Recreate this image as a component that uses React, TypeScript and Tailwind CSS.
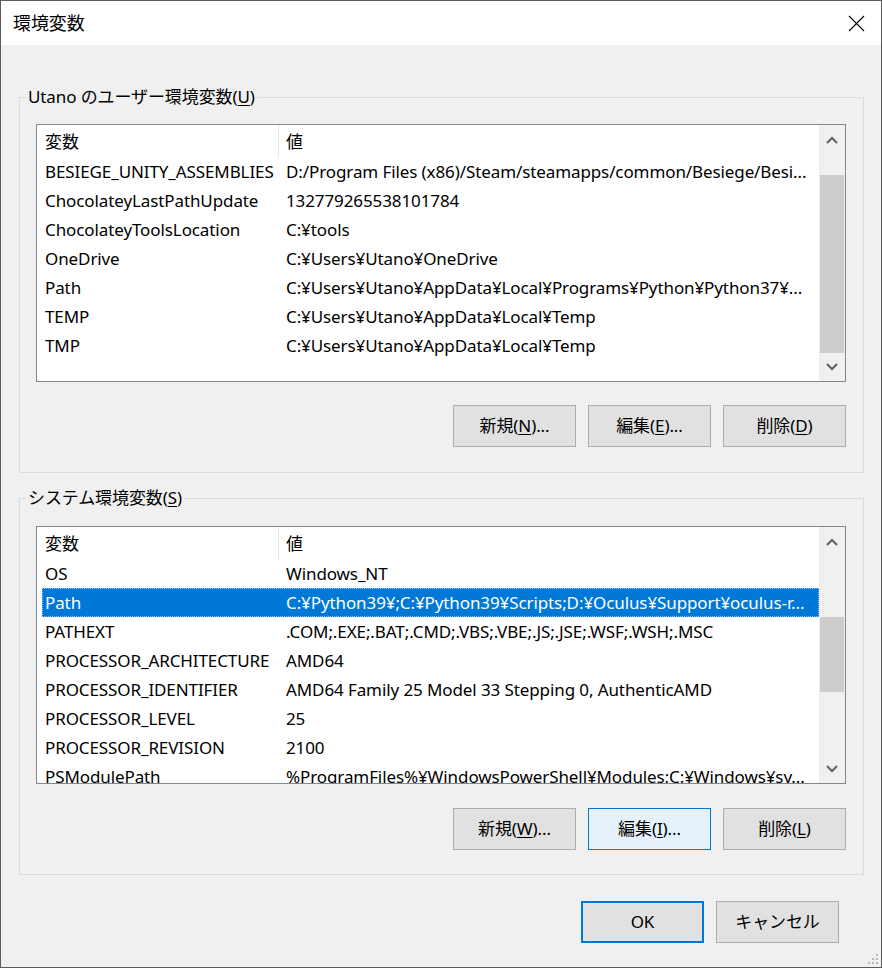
import React, { ReactElement } from 'react';

type Row = { name: string; value: string };

const userVars: Row[] = [
  { name: 'BESIEGE_UNITY_ASSEMBLIES', value: 'D:/Program Files (x86)/Steam/steamapps/common/Besiege/Besi...' },
  { name: 'ChocolateyLastPathUpdate', value: '132779265538101784' },
  { name: 'ChocolateyToolsLocation', value: 'C:¥tools' },
  { name: 'OneDrive', value: 'C:¥Users¥Utano¥OneDrive' },
  { name: 'Path', value: 'C:¥Users¥Utano¥AppData¥Local¥Programs¥Python¥Python37¥...' },
  { name: 'TEMP', value: 'C:¥Users¥Utano¥AppData¥Local¥Temp' },
  { name: 'TMP', value: 'C:¥Users¥Utano¥AppData¥Local¥Temp' },
];

const systemVars: Row[] = [
  { name: 'OS', value: 'Windows_NT' },
  { name: 'Path', value: 'C:¥Python39¥;C:¥Python39¥Scripts;D:¥Oculus¥Support¥oculus-r...' },
  { name: 'PATHEXT', value: '.COM;.EXE;.BAT;.CMD;.VBS;.VBE;.JS;.JSE;.WSF;.WSH;.MSC' },
  { name: 'PROCESSOR_ARCHITECTURE', value: 'AMD64' },
  { name: 'PROCESSOR_IDENTIFIER', value: 'AMD64 Family 25 Model 33 Stepping 0, AuthenticAMD' },
  { name: 'PROCESSOR_LEVEL', value: '25' },
  { name: 'PROCESSOR_REVISION', value: '2100' },
  { name: 'PSModulePath', value: '%ProgramFiles%¥WindowsPowerShell¥Modules;C:¥Windows¥sy...' },
];

const font = { fontFamily: '"Segoe UI", "Noto Sans", "Noto Sans CJK JP", sans-serif' };

function Chevron({ up }: { up?: boolean }) {
  return (
    <svg width="12" height="8" viewBox="0 0 12 8">
      <polyline
        points={up ? '1,7 6,2 11,7' : '1,1 6,6 11,1'}
        fill="none"
        stroke="#606060"
        strokeWidth="2"
      />
    </svg>
  );
}

function Scrollbar({ thumbTop, thumbHeight }: { thumbTop: number; thumbHeight: number }) {
  return (
    <div className="flex w-[26px] shrink-0 flex-col bg-[#f0f0f0]">
      <div className="flex h-[30px] items-center justify-center">
        <Chevron up />
      </div>
      <div className="flex-1 px-[1px]">
        <div className="bg-[#cdcdcd]" style={{ marginTop: thumbTop, height: thumbHeight }} />
      </div>
      <div className="flex h-[28px] items-center justify-center">
        <Chevron />
      </div>
    </div>
  );
}

function VarList({
  rows,
  selected,
  thumbTop,
  thumbHeight,
}: {
  rows: Row[];
  selected?: number;
  thumbTop: number;
  thumbHeight: number;
}) {
  return (
    <div className="flex h-[258px] w-[810px] border border-[#828790] bg-white">
      <div className="flex min-w-0 flex-1 flex-col overflow-hidden">
        <div className="flex h-[32px] shrink-0 items-center leading-[29px]">
          <div className="flex h-full w-[242px] items-center border-r border-[#e5e5e5] pl-[8px]">変数</div>
          <div className="pl-[7px]">値</div>
        </div>
        {rows.map((row, idx) => (
          <div
            key={row.name}
            className={`ml-[5px] flex h-[29px] shrink-0 items-center whitespace-nowrap leading-[29px] ${
              idx === selected
                ? 'bg-[#0078d7] text-white outline-1 -outline-offset-1 outline-dotted outline-[#8cc0ec]'
                : 'text-black'
            }`}
          >
            <div className="w-[236px] shrink-0 overflow-hidden pl-[3px]">{row.name}</div>
            <div className="min-w-0 flex-1 overflow-hidden pl-[8px]">{row.value}</div>
          </div>
        ))}
      </div>
      <Scrollbar thumbTop={thumbTop} thumbHeight={thumbHeight} />
    </div>
  );
}

function Button({
  label,
  hotkey,
  suffix = '',
  variant = 'normal',
}: {
  label: string;
  hotkey?: string;
  suffix?: string;
  variant?: 'normal' | 'hover' | 'default';
}) {
  const styles =
    variant === 'hover'
      ? 'border border-[#0078d7] bg-[#e5f1fb]'
      : variant === 'default'
        ? 'border-2 border-[#0078d7] bg-[#e1e1e1]'
        : 'border border-[#adadad] bg-[#e1e1e1]';
  return (
    <div className={`flex h-[42px] w-[123px] items-center justify-center text-black ${styles}`}>
      {label}
      {hotkey && (
        <>
          (<span className="underline underline-offset-2">{hotkey}</span>){suffix}
        </>
      )}
    </div>
  );
}

function Group({
  title,
  hotkey,
  children,
  className,
}: {
  title: string;
  hotkey: string;
  children: React.ReactNode;
  className?: string;
}) {
  return (
    <fieldset className={`ml-[18px] w-[845px] min-w-0 border border-[#dcdcdc] px-[16px] ${className ?? ''}`}>
      <legend className="ml-[-10px] px-[2px] text-[17px] leading-[24px] text-black">
        {title}(<span className="underline underline-offset-2">{hotkey}</span>)
      </legend>
      {children}
    </fieldset>
  );
}

export default function App(): ReactElement {
  return (
    <div
      className="relative flex h-[968px] w-[882px] flex-col border border-[#5c5c5c] bg-[#f0f0f0] text-[17px] tracking-[-0.1px]"
      style={font}
    >
      <div className="flex h-[44px] shrink-0 items-center justify-between bg-white pl-[12px] pr-[16px]">
        <span className="text-[18px] text-black">環境変数</span>
        <svg width="17" height="17" viewBox="0 0 17 17">
          <path d="M1 1 L16 16 M16 1 L1 16" stroke="#000" strokeWidth="1.1" />
        </svg>
      </div>

      <Group title="Utano のユーザー環境変数" hotkey="U" className="mt-[40px] pb-[25px] pt-[15px]">
        <VarList rows={userVars} thumbTop={21} thumbHeight={178} />
        <div className="mr-[1px] mt-[23px] flex justify-end gap-[12px]">
          <Button label="新規" hotkey="N" suffix="..." />
          <Button label="編集" hotkey="E" suffix="..." />
          <Button label="削除" hotkey="D" />
        </div>
      </Group>

      <Group title="システム環境変数" hotkey="S" className="mt-[13px] pb-[24px] pt-[16px]">
        <VarList rows={systemVars} selected={1} thumbTop={60} thumbHeight={75} />
        <div className="mr-[1px] mt-[24px] flex justify-end gap-[12px]">
          <Button label="新規" hotkey="W" suffix="..." />
          <Button label="編集" hotkey="I" suffix="..." variant="hover" />
          <Button label="削除" hotkey="L" />
        </div>
      </Group>

      <div className="mt-[26px] flex justify-end gap-[12px] pr-[42px]">
        <Button label="OK" variant="default" />
        <Button label="キャンセル" />
      </div>

      {/* grip de redimensionar */}
      <svg className="absolute bottom-[2px] right-[2px]" width="12" height="12" viewBox="0 0 12 12">
        {[
          [9, 1],
          [5, 5],
          [9, 5],
          [1, 9],
          [5, 9],
          [9, 9],
        ].map(([x, y], i) => (
          <rect key={i} x={x} y={y} width="2" height="2" fill="#b8b8b8" />
        ))}
      </svg>
    </div>
  );
}
